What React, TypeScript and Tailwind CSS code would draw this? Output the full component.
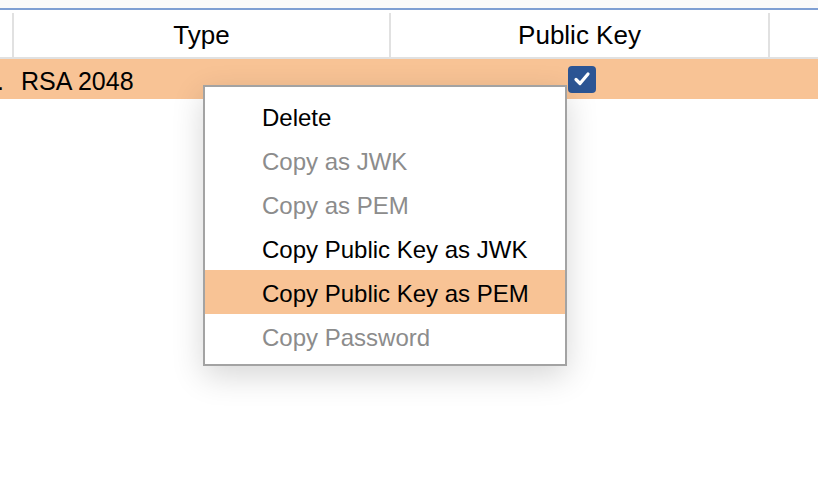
const items = [
  { label: "Delete", enabled: true },
  { label: "Copy as JWK", enabled: false },
  { label: "Copy as PEM", enabled: false },
  { label: "Copy Public Key as JWK", enabled: true },
  { label: "Copy Public Key as PEM", enabled: true, active: true },
  { label: "Copy Password", enabled: false },
];

function Check() {
  return (
    <div className="flex h-[27px] w-[28px] items-center justify-center rounded-[4px] bg-[#2c5594]">
      <svg width="18" height="16" viewBox="0 0 18 16" fill="none">
        <path d="M3 8.5 L7 12.5 L15 3" stroke="white" strokeWidth="3.2" strokeLinecap="round" strokeLinejoin="round" />
      </svg>
    </div>
  );
}

export default function App() {
  return (
    <div className="relative h-[504px] w-[818px] overflow-hidden bg-white font-['Liberation_Sans',Arial,sans-serif] text-black">
      <div className="h-2 bg-[#fafafa]" />
      <div className="h-[2px] bg-[#7f9fd3]" />

      {/* header */}
      <div className="flex h-[49px] border-b-2 border-[#e1e1e1] pt-[3px] text-[26px]">
        <div className="w-[14px] border-r-2 border-[#e1e1e1]" />
        <div className="flex w-[377px] items-center justify-center border-r-2 border-[#e1e1e1]">Type</div>
        <div className="flex w-[379px] items-center justify-center border-r-2 border-[#e1e1e1]">Public Key</div>
        <div className="flex-1" />
      </div>

      {/* selected row */}
      <div className="flex h-10 items-center bg-[#f8c395] text-[25px]">
        <div className="w-[14px] overflow-hidden pt-[4px]">
          <span className="-ml-[3px] block leading-none">.</span>
        </div>
        <div className="w-[377px] pl-[7px] pt-[4px] leading-none">RSA 2048</div>
        <div className="flex w-[379px] justify-center pl-[3px]">
          <Check />
        </div>
      </div>

      {/* context menu */}
      <div className="absolute left-[203px] top-[85px] w-[364px] border-2 border-[#a3a3a3] bg-white pb-[6px] pt-[7px] shadow-[0_10px_30px_rgba(0,0,0,0.16)]">
        {items.map((it) => (
          <div
            key={it.label}
            className={`flex h-11 items-center pl-[57px] pt-[3px] text-[24px] ${it.active ? "bg-[#f8c395]" : ""} ${it.enabled ? "text-black" : "text-[#8c8c8c]"}`}
          >
            {it.label}
          </div>
        ))}
      </div>
    </div>
  );
}
